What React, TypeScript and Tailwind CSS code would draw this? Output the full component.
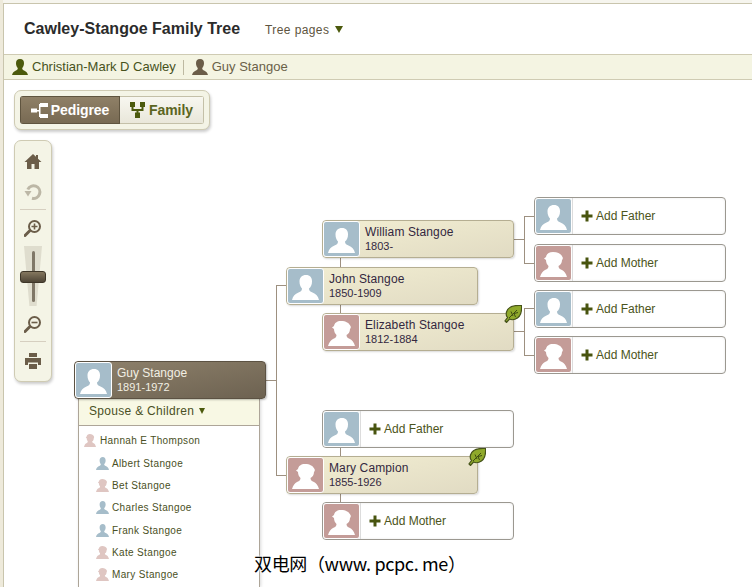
import React from "react";

const tree = [
  { name: "William Stangoe", dates: "1803-", x: 322, y: 220, sex: "m" },
  { name: "John Stangoe", dates: "1850-1909", x: 286, y: 267, sex: "m" },
  { name: "Elizabeth Stangoe", dates: "1812-1884", x: 322, y: 313, sex: "f", leaf: true },
  { name: "Mary Campion", dates: "1855-1926", x: 286, y: 456, sex: "f", leaf: true },
];

const addNodes = [
  { label: "Add Father", x: 534, y: 197, sex: "m" },
  { label: "Add Mother", x: 534, y: 244, sex: "f" },
  { label: "Add Father", x: 534, y: 290, sex: "m" },
  { label: "Add Mother", x: 534, y: 336, sex: "f" },
  { label: "Add Father", x: 322, y: 410, sex: "m" },
  { label: "Add Mother", x: 322, y: 502, sex: "f" },
];

// [x, y, w, h] in page pixels
const lines = [
  [266, 380, 11, 1],
  [276, 285, 1, 191],
  [276, 285, 10, 1],
  [276, 475, 10, 1],
  [340, 258, 1, 9],
  [340, 305, 1, 8],
  [340, 448, 1, 8],
  [340, 494, 1, 8],
  [514, 239, 10, 1],
  [524, 216, 1, 48],
  [524, 216, 10, 1],
  [524, 263, 10, 1],
  [514, 331, 10, 1],
  [524, 308, 1, 48],
  [524, 308, 10, 1],
  [524, 355, 10, 1],
];

const children = [
  { name: "Albert Stangoe", sex: "m" },
  { name: "Bet Stangoe", sex: "f" },
  { name: "Charles Stangoe", sex: "m" },
  { name: "Frank Stangoe", sex: "m" },
  { name: "Kate Stangoe", sex: "f" },
  { name: "Mary Stangoe", sex: "f" },
];

function Silhouette({ sex, className }: { sex: string; className?: string }) {
  return (
    <svg viewBox="0 0 27 25" className={className} fill="currentColor" preserveAspectRatio="none">
      {sex === "m" ? (
        <path d="M14 0c-4 0-6.500 2.500-6.500 6.500 0 3 1 5.500 2.500 7 0 2-1 3-3.500 4C3 19 1 21 0 25h27c-1-4-3-6-6.500-7.500-2.500-1-3.500-2-3.500-4 2-1.500 3-4 3-7C20 2.500 18 0 14 0z" />
      ) : (
        <path d="M13 0C9 0 6.500 2 6 5L4 6.500 6 8c0 2.500 1 4.500 2.500 6 0 2-1 3-3.500 4C3 19 1 21.500 0 25h27c-1-3.500-3-6-5-7-2.500-1-3.500-2-3.500-4 2-1 3.500-3 3.500-6 1-1 1-2 .5-3C21 2 18 0 13 0z" />
      )}
    </svg>
  );
}

function Avatar({ sex }: { sex: string }) {
  return (
    <div className={`w-[37px] h-[36px] shrink-0 border border-white rounded-[3px] flex items-end justify-center overflow-hidden text-white pb-[3px] ${sex === "m" ? "bg-[#a6bdca]" : "bg-[#c49c98]"}`}>
      <Silhouette sex={sex} className="w-[27px] h-[25px]" />
    </div>
  );
}

function Leaf() {
  return (
    <svg viewBox="0 0 18 18" className="absolute -top-[9px] -right-[9px] w-[18px] h-[18px]">
      <path d="M17.500.5C10 0 4 1.500 2.500 7c-.6 2.500 0 4.500 1 5.500L1 16l1.500 1.500 3-3.500c1.500.8 3.500 1 5.500.3C16.500 12.500 18 7 17.500.5z" fill="#8fa92b" stroke="#46531a" strokeWidth="1.200" />
      <path d="M5 13 13 5M7 6.500l2 4.500M11.500 12 10 8.500l4-1" fill="none" stroke="#3f4d12" strokeWidth="1" />
    </svg>
  );
}

function Plus() {
  return (
    <svg viewBox="0 0 12 12" className="w-[12px] h-[12px] shrink-0" fill="#48540f">
      <path d="M4.500 0.500h3v4h4v3h-4v4h-3v-4h-4v-3h4z" />
    </svg>
  );
}

function PersonIcon({ color }: { color: string }) {
  return (
    <svg viewBox="0 0 16 16" className="w-[16px] h-[16px] shrink-0" fill={color}>
      <path d="M8 0C5 0 4 2 4 4.200c0 2 .8 3.800 1.800 4.800 0 1.500-.8 2-2.300 2.700C1.800 12.500.6 13.500 0 16h16c-.6-2.500-1.800-3.500-3.500-4.300-1.500-.7-2.300-1.200-2.300-2.700 1-1 1.800-2.800 1.800-4.800C12 2 11 0 8 0z" />
    </svg>
  );
}

function ToolIcon({ children, className }: { children: React.ReactNode; className?: string }) {
  return (
    <svg viewBox="0 0 18 18" className={`w-[18px] h-[18px] ${className ?? ""}`} fill="#6b5d49">
      {children}
    </svg>
  );
}

function Magnifier({ plus }: { plus?: boolean }) {
  return (
    <ToolIcon>
      <path d="M1 16.500 5.500 12" stroke="#6b5d49" strokeWidth="3" strokeLinecap="round" fill="none" />
      <circle cx="10.500" cy="7.500" r="5.500" fill="#f4f4e6" stroke="#6b5d49" strokeWidth="2" />
      <path d={plus ? "M7.500 6.700h2.200V4.500h1.600v2.200h2.200v1.600h-2.200v2.200H9.700V8.300H7.500z" : "M7.500 6.700h6v1.600h-6z"} />
    </ToolIcon>
  );
}

export default function App() {
  return (
    <div className="relative w-[752px] h-[587px] overflow-hidden bg-white font-['Liberation_Sans',Arial,sans-serif]">
      <div className="absolute left-0 top-0 bottom-0 w-[3px] bg-[#eeeadb]" />
      <div className="h-[3px] bg-[#f6f5ee]" />
      <div className="ml-[3px] h-[584px] border-l border-t border-[#c9c5ad] flex flex-col">
        <div className="h-[50px] flex items-center pl-[20px] shrink-0">
          <h1 className="text-[16px] font-bold text-[#2b2b2b] mt-[-1px]">Cawley-Stangoe Family Tree</h1>
          <span className="ml-[25px] text-[12px] tracking-[0.4px] text-[#5d5440] mt-[1px]">Tree pages</span>
          <span className="ml-[6px] w-0 h-0 border-x-[4px] border-x-transparent border-t-[7px] border-t-[#4c5a0d]" />
        </div>
        <div className="h-[26px] shrink-0 bg-[#f4f4e2] border-y border-[#cfcbb3] flex items-center pl-[8px] text-[13px]">
          <PersonIcon color="#4c5a0d" />
          <span className="ml-[4px] text-[#47521c]">Christian-Mark D Cawley</span>
          <span className="ml-[7px] w-px h-[15px] bg-[#bdb9a1]" />
          <span className="ml-[8px]"><PersonIcon color="#6b5d49" /></span>
          <span className="ml-[4px] text-[#6a6148]">Guy Stangoe</span>
        </div>

        <div className="pl-[10px] pt-[10px] flex flex-col items-start gap-[10px]">
          <div className="p-[5px] bg-[#f4f4e6] border border-[#cfcbb3] rounded-[7px] shadow-[1px_2px_3px_rgba(0,0,0,0.2)]">
            <div className="flex h-[28px] w-[184px] rounded-[3px] overflow-hidden text-[14px] font-bold tracking-[-0.1px]">
              <div className="w-[100px] flex items-center justify-center gap-[3px] text-white bg-gradient-to-b from-[#8f8067] to-[#786a53] border border-[#5f543f]">
                <svg viewBox="0 0 17 15" className="w-[17px] h-[15px]" fill="#fff">
                  <path d="M0 5.500h6v4H0zM6 7h2v1.500H6zM8 1h1.500v13H8zM9 0h8v4H9zM9 11h8v4H9z" />
                </svg>
                Pedigree
              </div>
              <div className="flex-1 flex items-center justify-center gap-[4px] text-[#5b6521] bg-gradient-to-b from-[#f8f7f0] to-[#e9e7da] border border-l-0 border-[#c4c0a8]">
                <svg viewBox="0 0 15 16" className="w-[15px] h-[16px]" fill="#4c5a0d">
                  <path d="M0 0h5v5H3.500v2h8V5H10V0h5v5h-1.500v4H8.500v1.500H10V16H5v-5.500h1.500V9h-5V5H0z" />
                </svg>
                Family
              </div>
            </div>
          </div>

          <div className="w-[38px] h-[242px] bg-[#f4f4e6] border border-[#cfcbb3] rounded-[7px] shadow-[1px_2px_3px_rgba(0,0,0,0.2)] flex flex-col items-center pt-[12px]">
            <ToolIcon>
              <path d="M9 1 0.500 9H3v7h4.500v-5h3v5H15V9h2.500L14 5.700V2h-2v1.800z" />
            </ToolIcon>
            <ToolIcon className="mt-[12px] opacity-40">
              <path d="M3.800 6.500A6.300 6.300 0 1 1 8 15.200" fill="none" stroke="#6b5d49" strokeWidth="3" />
              <path d="M0.500 8h7l-3.500 5.500z" />
            </ToolIcon>
            <div className="mt-[8px] w-[26px] h-px bg-[#d6cfc0]" />
            <div className="mt-[9px]"><Magnifier plus /></div>
            <div className="relative mt-[9px] w-[26px] h-[60px] flex justify-center">
              <div className="w-[18px] h-[60px] bg-[#dfddce] [clip-path:polygon(0_0,100%_0,70%_100%,30%_100%)]" />
              <div className="absolute top-[5px] left-[11.500px] w-[3px] h-[51px] bg-[#7f7767] rounded-full" />
              <div className="absolute top-[25px] left-0 w-[26px] h-[12px] rounded-[3px] bg-gradient-to-b from-[#85785f] to-[#4f4637] border border-[#3e3628]" />
            </div>
            <div className="mt-[9px]"><Magnifier /></div>
            <div className="mt-[8px] w-[26px] h-px bg-[#d6cfc0]" />
            <ToolIcon className="mt-[10px]">
              <path d="M5 1h8v4H5zM1 6h16v7h-3v-2.500H4V13H1zM5 12h8v5H5z" />
            </ToolIcon>
          </div>
        </div>
      </div>

      {/* tree canvas, coordinates are page pixels */}
      {lines.map(([x, y, w, h], i) => (
        <div key={i} className="absolute bg-[#9d9080]" style={{ left: x, top: y, width: w, height: h }} />
      ))}

      {tree.map((p) => (
        <div key={p.name} className="absolute w-[192px] h-[38px] flex rounded-[4px] border border-[#b5ae92] bg-gradient-to-br from-[#f2eed2] to-[#e1dbc3] shadow-[1px_1px_2px_rgba(0,0,0,0.15)]" style={{ left: p.x, top: p.y }}>
          <Avatar sex={p.sex} />
          <div className="ml-[5px] flex flex-col justify-center text-[#33283f]">
            <div className="text-[12px] leading-[15px] tracking-[0.12px] mt-[-1px]">{p.name}</div>
            <div className="text-[11px] leading-[13px]">{p.dates}</div>
          </div>
          {p.leaf && <Leaf />}
        </div>
      ))}

      {addNodes.map((p, i) => (
        <div key={i} className="absolute w-[192px] h-[38px] flex items-center rounded-[4px] border border-[#9b9890] bg-white shadow-[inset_0_0_3px_rgba(0,0,0,0.08)]" style={{ left: p.x, top: p.y }}>
          <Avatar sex={p.sex} />
          <span className="w-px h-[36px] bg-[#dcdcdc]" />
          <span className="ml-[8px]"><Plus /></span>
          <span className="ml-[3px] text-[12px] text-[#4c5420]">{p.label}</span>
        </div>
      ))}

      <div className="absolute left-[78px] top-[399px] w-[182px] h-[188px] bg-white border-x border-[#ada598] shadow-[1px_0_3px_rgba(0,0,0,0.15)]">
        <div className="h-[27px] bg-[#f8f8e4] border-b border-[#ada598] flex items-center pl-[10px] pb-[2px] text-[12px] tracking-[0.3px] text-[#4a5024]">
          Spouse &amp; Children
          <span className="ml-[5px] w-0 h-0 border-x-[3.500px] border-x-transparent border-t-[6px] border-t-[#4c5a0d]" />
        </div>
        <div className="pt-[3px] text-[10px] tracking-[0.35px] text-[#4a5024]">
          <div className="h-[23px] flex items-center pl-[5px] gap-[4px]">
            <Silhouette sex="f" className="w-[12px] h-[13px] text-[#dfc6c2]" />
            Hannah E Thompson
          </div>
          {children.map((c) => (
            <div key={c.name} className="h-[22.300px] flex items-center pl-[17px] gap-[3px]">
              <Silhouette sex={c.sex} className={`w-[13px] h-[13px] ${c.sex === "m" ? "text-[#a6bdca]" : "text-[#dfc6c2]"}`} />
              {c.name}
            </div>
          ))}
        </div>
      </div>

      <div className="absolute left-[74px] top-[361px] w-[192px] h-[38px] flex rounded-[4px] border border-[#5c5243] bg-gradient-to-br from-[#8f826c] to-[#6d6251] shadow-[1px_1px_2px_rgba(0,0,0,0.25)]">
        <Avatar sex="m" />
        <div className="ml-[5px] flex flex-col justify-center text-[#f2efe4]">
          <div className="text-[12px] leading-[15px]">Guy Stangoe</div>
          <div className="text-[11px] leading-[13px]">1891-1972</div>
        </div>
      </div>

      <div className="absolute left-[254px] top-[552px] text-[18px] leading-[22px] tracking-[-0.35px] text-black [text-shadow:0_0_2px_#fff,0_0_2px_#fff,0_0_3px_#fff] font-['Noto_Sans_CJK_SC',sans-serif] whitespace-nowrap">
        双电网（www. pcpc. me）
      </div>
    </div>
  );
}
